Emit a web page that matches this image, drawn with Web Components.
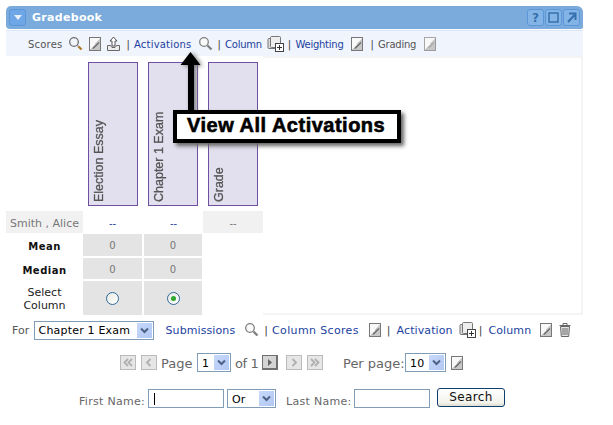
<!DOCTYPE html>
<html>
<head>
<meta charset="utf-8">
<style>
  html, body { margin: 0; background: #fff; }
  body { font-family: "DejaVu Sans", sans-serif; font-size: 11px; color: #555; }
</style>
</head>
<body>
<gb-page></gb-page>

<script>
  const EDIT_BASE = '<defs><linearGradient id="eg" x1="0" y1="0" x2="1" y2="1"><stop offset=".5" stop-color="#f8f8f8"/><stop offset=".5" stop-color="#c8c8c8"/></linearGradient></defs>';
  const ICONS = {
    search: '<circle cx="6" cy="6" r="4.300" fill="#f2f6fa" stroke="#707070" stroke-width="1.300"/><path d="M9.200 9.200l1.300 1.300" stroke="#999" stroke-width="1.500"/><path d="M10.500 10.500l3 3" stroke="#b07820" stroke-width="2.300"/>',
    searchgray: '<circle cx="6" cy="6" r="4.300" fill="#fafafa" stroke="#808080" stroke-width="1.300"/><path d="M9.500 9.500l4 4" stroke="#808080" stroke-width="2.300"/>',
    edit: EDIT_BASE + '<rect x="1.500" y="1.500" width="11" height="13" fill="url(#eg)" stroke="#777"/><path d="M5 11.500l5.500-5.500 1 1-5.500 5.500-1.500.5z" fill="#6a6a6a"/>',
    editoff: EDIT_BASE + '<rect x="1.500" y="1.500" width="11" height="13" fill="url(#eg)" stroke="#555" stroke-dasharray="1 1"/><path d="M5 11.500l5.500-5.500 1 1-5.500 5.500z" fill="#aaa"/>',
    upload: '<path d="M1.500 9.500h3l1.500 2h3l1.500-2h3v5h-12z" fill="#eee" stroke="#666"/><path d="M7.500 1l3.500 4H9v5H6V5H4z" fill="#fff" stroke="#555"/>',
    add: '<rect x="1" y="3.500" width="11" height="10" rx="1" fill="#ddd" stroke="#777"/><rect x="3.500" y="1.500" width="10" height="11" rx="1" fill="#eee" stroke="#777"/><rect x="8.500" y="8.500" width="8" height="8" fill="#fff" stroke="#444"/><path d="M12.500 10v5M10 12.500h5" stroke="#333"/>',
    trash: '<path d="M1.500 3.500h11M5 3V1.500h4V3" fill="none" stroke="#666"/><path d="M2.500 4.500h9l-.8 10h-7.400z" fill="#e4e4e4" stroke="#666"/><path d="M5 6v7M7 6v7M9 6v7" stroke="#666"/>'
  };

  class GbIcon extends HTMLElement {
    connectedCallback() {
      const name = this.getAttribute('name');
      const w = name === 'add' ? 18 : name === 'trash' ? 14 : 16;
      const h = name === 'add' ? 18 : 16;
      this.attachShadow({mode: 'open'}).innerHTML = `
        <style>:host { display: inline-flex; flex: none; } svg { display: block; }</style>
        <svg width="${w}" height="${h}" viewBox="0 0 ${w} ${h}">${ICONS[name]}</svg>`;
    }
  }

  class GbTitlebar extends HTMLElement {
    connectedCallback() {
      this.attachShadow({mode: 'open'}).innerHTML = `
        <style>
          :host { display: flex; align-items: center; height: 23px; margin: 6px 30px 0 6px; padding: 0 3px 0 3px;
                  background: #7aabdc; border-radius: 5px 6px 2px 4px; color: #fff; font-weight: bold; font-size: 11px; letter-spacing: .3px; }
          .btn { box-sizing: border-box; width: 17px; height: 17px; border: 1px solid #5a96d8; border-radius: 3px; background: #84b4e6;
                 color: #3570ad; display: flex; align-items: center; justify-content: center; font-weight: bold; font-size: 12px; letter-spacing: 0; }
          .menu { margin-right: 6px; background: #6ea6e8; }
          .title { flex: 1; }
          .tools { display: flex; gap: 1px; }
          .tri { width: 0; height: 0; border: 4px solid transparent; border-top: 5px solid #e8f0fa; border-bottom: 0; }
          svg { display: block; }
        </style>
        <div class="btn menu"><div class="tri"></div></div>
        <div class="title"><slot></slot></div>
        <div class="tools">
          <div class="btn">?</div>
          <div class="btn"><svg width="11" height="11"><rect x="1" y="1" width="9" height="9" fill="none" stroke="#3570ad" stroke-width="1.500"/></svg></div>
          <div class="btn"><svg width="11" height="11"><path d="M2 10l6.500-7M3 1.500h6.500V8" fill="none" stroke="#3570ad" stroke-width="2"/></svg></div>
        </div>`;
    }
  }

  class GbToolbar extends HTMLElement {
    connectedCallback() {
      this.attachShadow({mode: 'open'}).innerHTML = `
        <style>
          :host { display: flex; align-items: center; height: 26px; margin: 1px 30px 0 6px; padding: 1px 0 0 22px;
                  background: #f0f4fc; border-top: 1px solid #dce6f4; box-sizing: border-box; font-size: 10px; letter-spacing: .2px; color: #555; }
          ::slotted(a) { color: #1c3fa0; }
        </style>
        <slot></slot>`;
    }
  }

  class GbHeadcell extends HTMLElement {
    connectedCallback() {
      this.attachShadow({mode: 'open'}).innerHTML = `
        <style>
          :host { display: flex; box-sizing: border-box; width: 50px; height: 144px; background: #e2dfee; border: 1px solid #6f4f9f;
                  align-items: flex-start; justify-content: flex-start; }
          .t { writing-mode: vertical-rl; transform: rotate(180deg); font: 12.500px "Liberation Sans", sans-serif; -webkit-text-stroke: .3px #555;
               color: #555; height: 139px; margin-left: 3px; box-sizing: border-box; white-space: nowrap; }
        </style>
        <div class="t"><slot></slot></div>`;
    }
  }

  class GbGrid extends HTMLElement {
    connectedCallback() {
      this.attachShadow({mode: 'open'}).innerHTML = `
        <style>
          :host { display: flex; margin: 0 30px 0 6px; }
          .left { width: 257px; flex: none; }
          .fill { flex: 1; border: 2px solid #f4f4f4; border-left: 0; }
          .heads { display: flex; gap: 10px; margin: 6px 0 0 82px; }
          .grid { display: grid; grid-template-columns: 77px 61px 59px 60px; grid-template-rows: 23px 24px 23px 34px; margin-top: 5px; font-size: 11px; width: 257px; }
          .c { display: flex; align-items: center; justify-content: center; text-align: center; color: #777; padding-top: 1px; box-sizing: border-box; }
          .lab { color: #222; line-height: 13px; }
          .b { font-weight: bold; color: #111; font-size: 10px; letter-spacing: .5px; }
          .g { background: #e4e4e4; margin: 0 2px 2px 0; font-size: 10px; }
          .g.n { margin-right: 1px; }
          .g.e { margin-bottom: 0; }
          .s { background: #f1f1f1; margin-bottom: 1px; font-size: 11px; padding-top: 2px; }
          .lnk { color: #1c3fa0; font-size: 10px; padding-top: 2px; }
          .m { margin-right: 2px; }
          .radio { box-sizing: border-box; width: 13px; height: 13px; border-radius: 50%; border: 1px solid #2f6a9c; background: linear-gradient(135deg, #e8e8e4, #fff); display: flex; align-items: center; justify-content: center; }
          .radio i { width: 5px; height: 5px; border-radius: 50%; background: #2ca82c; }
        </style>
        <div class="left">
          <div class="heads">
            <gb-headcell>Election Essay</gb-headcell>
            <gb-headcell>Chapter 1 Exam</gb-headcell>
            <gb-headcell>Grade</gb-headcell>
          </div>
          <div class="grid">
            <div class="c s">Smith , Alice</div><div class="c lnk m">--</div><div class="c lnk">--</div><div class="c s" style="font-size:10px">--</div>
            <div class="c lab b">Mean</div><div class="c g">0</div><div class="c g n">0</div><div></div>
            <div class="c lab b">Median</div><div class="c g">0</div><div class="c g n">0</div><div></div>
            <div class="c lab">Select<br>Column</div><div class="c g e"><div class="radio"></div></div><div class="c g n e"><div class="radio"><i></i></div></div><div></div>
          </div>
        </div>
        <div class="fill"></div>`;
    }
  }

  class GbSelect extends HTMLElement {
    connectedCallback() {
      const w = this.getAttribute('width') || 60;
      this.attachShadow({mode: 'open'}).innerHTML = `
        <style>
          :host { display: inline-flex; flex: none; box-sizing: border-box; width: ${w}px; height: 19px; border: 1px solid #7f9db9; background: #fff;
                  align-items: center; padding: 1px; color: #000; font-size: 11px; letter-spacing: .2px; }
          .v { flex: 1; padding: 1px 0 0 3px; white-space: nowrap; }
          .a { width: 15px; height: 15px; background: linear-gradient(135deg, #c8d8fa, #b0c8f4); display: flex; align-items: center; justify-content: center; }
        </style>
        <div class="v"><slot></slot></div>
        <div class="a"><svg width="9" height="7"><path d="M1 1.500l3.500 3.500L8 1.500" fill="none" stroke="#4d6185" stroke-width="2"/></svg></div>`;
    }
  }

  class GbNavbtn extends HTMLElement {
    connectedCallback() {
      const on = this.hasAttribute('on');
      const d = this.getAttribute('d');
      const mark = on
        ? `<path d="${d}" fill="#666"/>`
        : `<path d="${d}" fill="none" stroke="#b0b0b0" stroke-width="1.800"/>`;
      this.attachShadow({mode: 'open'}).innerHTML = `
        <style>
          :host { display: inline-flex; flex: none; box-sizing: border-box; width: 16px; height: 15px; background: ${on ? '#d4d4d4' : '#e6e6e6'}; align-items: center; justify-content: center;
                  border: 1px solid ${on ? '#707070' : '#bbb'}; ${on ? 'border-right-width:2px;border-bottom-width:2px;' : ''} }
          svg { display: block; }
        </style>
        <svg width="10" height="9">${mark}</svg>`;
    }
  }

  class GbFilter extends HTMLElement {
    connectedCallback() {
      this.attachShadow({mode: 'open'}).innerHTML = `
        <style>
          :host { display: flex; align-items: center; height: 18px; margin: 6px 0 0 12px; font-size: 11px; color: #555; letter-spacing: .1px; }
          ::slotted(*) { flex: none; }
          ::slotted(a) { color: #1c3fa0; }
        </style>
        <slot></slot>`;
    }
  }

  class GbPager extends HTMLElement {
    connectedCallback() {
      this.attachShadow({mode: 'open'}).innerHTML = `
        <style>
          :host { display: flex; align-items: center; height: 19px; margin: 14px 0 0 120px; font-size: 13px; color: #666; }
          ::slotted(span) { white-space: nowrap; padding-top: 1px; }
        </style>
        <slot></slot>`;
    }
  }

  class GbSearch extends HTMLElement {
    connectedCallback() {
      this.attachShadow({mode: 'open'}).innerHTML = `
        <style>
          :host { display: flex; align-items: center; height: 19px; margin: 17px 0 0 79px; font-size: 11px; letter-spacing: .3px; color: #666; }
          .lab { padding-top: 6px; white-space: nowrap; }
          .inp { box-sizing: border-box; width: 76px; height: 19px; border: 1px solid #7f9db9; background: #fff; padding: 3px 0 0 5px; flex: none; }
          .caret { width: 1px; height: 12px; background: #000; }
          .go { box-sizing: border-box; width: 68px; height: 19px; margin: -2px 0 0 7px; border: 1px solid #0f3f6f; border-radius: 3px; background: linear-gradient(#fff, #f3f3ec 80%, #dcdcd2);
                color: #111; font-size: 12px; text-align: center; line-height: 17px; letter-spacing: .4px; }
        </style>
        <span class="lab" style="width:65px">First Name:</span>
        <div class="inp" style="margin-left:4px"><div class="caret"></div></div>
        <gb-select width="49" style="margin-left:3px">Or</gb-select>
        <span class="lab" style="margin-left:10px;width:64px">Last Name:</span>
        <div class="inp" style="margin-left:4px"></div>
        <div class="go">Search</div>`;
    }
  }

  class GbCallout extends HTMLElement {
    connectedCallback() {
      this.attachShadow({mode: 'open'}).innerHTML = `
        <style>
          :host { display: block; position: absolute; left: 173px; top: 44px; width: 232px; height: 104px; pointer-events: none; }
          svg { position: absolute; left: 0; top: 0; }
          .box { position: absolute; left: 0; top: 66px; box-sizing: border-box; width: 228px; height: 33px; border: 4px solid #000; background: #fff;
                 box-shadow: 3px 3px 4px #666; color: #000; font: bold 20px "Liberation Sans", sans-serif; -webkit-text-stroke: .6px #000; letter-spacing: .5px; line-height: 23px; padding-left: 10px; white-space: nowrap; }
        </style>
        <svg width="40" height="70"><path d="M7.500 21L17.500 8l10 13h-6.500v47h-6V21z" fill="#000" style="filter:drop-shadow(2px 1px 2px #777)"/></svg>
        <div class="box"><slot></slot></div>`;
    }
  }

  class GbPage extends HTMLElement {
    connectedCallback() {
      this.attachShadow({mode: 'open'}).innerHTML = `
        <style>
          :host { display: block; position: relative; width: 613px; height: 425px; overflow: hidden; }
          a { text-decoration: none; }
          .sep { color: #444; }
          .tight { letter-spacing: -.25px; }
        </style>
        <gb-titlebar>Gradebook</gb-titlebar>
        <gb-toolbar>
          <span>Scores</span>
          <gb-icon name="search" style="margin-left:6px"></gb-icon>
          <gb-icon name="edit" style="margin-left:4px"></gb-icon>
          <gb-icon name="upload" style="margin-left:2px"></gb-icon>
          <span class="sep" style="margin-left:4px">|</span><a style="margin-left:4px">Activations</a>
          <gb-icon name="searchgray" style="margin-left:7px"></gb-icon>
          <span class="sep" style="margin-left:3px">|</span><a class="tight" style="margin-left:4px">Column</a>
          <gb-icon name="add" style="margin-left:5px"></gb-icon>
          <span class="sep" style="margin-left:3px">|</span><a class="tight" style="margin-left:4px">Weighting</a>
          <gb-icon name="edit" style="margin-left:6px"></gb-icon>
          <span class="sep" style="margin-left:5px">|</span><span class="tight" style="margin-left:4px">Grading</span>
          <gb-icon name="editoff" style="margin-left:7px"></gb-icon>
        </gb-toolbar>
        <gb-grid></gb-grid>
        <gb-filter>
          <span style="margin-right:4px">For</span>
          <gb-select width="120">Chapter 1 Exam</gb-select>
          <a style="margin-left:12px">Submissions</a>
          <gb-icon name="searchgray" style="margin-left:9px"></gb-icon>
          <span class="sep" style="margin:0 4px">|</span><a style="letter-spacing:.35px">Column Scores</a>
          <gb-icon name="edit" style="margin-left:9px"></gb-icon>
          <span class="sep" style="margin:0 6px 0 3px">|</span><a>Activation</a>
          <gb-icon name="add" style="margin-left:6px"></gb-icon>
          <span class="sep" style="margin:0 6px 0 2px">|</span><a>Column</a>
          <gb-icon name="edit" style="margin-left:8px"></gb-icon>
          <gb-icon name="trash" style="margin-left:3px"></gb-icon>
        </gb-filter>
        <gb-pager>
          <gb-navbtn d="M5 1L1.500 4.500 5 8M9 1L5.500 4.500 9 8"></gb-navbtn>
          <gb-navbtn d="M6.500 1L3 4.500 6.500 8" style="margin-left:5px"></gb-navbtn>
          <span style="margin-left:4px;width:31px">Page</span>
          <gb-select width="34" style="margin-left:5px">1</gb-select>
          <span style="margin-left:4px;width:23px;letter-spacing:-.4px">of 1</span>
          <gb-navbtn on d="M3 1l4 3.500L3 8z" style="margin-left:4px"></gb-navbtn>
          <gb-navbtn d="M3.500 1L7 4.500 3.500 8" style="margin-left:8px"></gb-navbtn>
          <gb-navbtn d="M1 1L4.500 4.500 1 8M5 1L8.500 4.500 5 8" style="margin-left:5px"></gb-navbtn>
          <span style="margin-left:20px;width:61px">Per page:</span>
          <gb-select width="41" style="margin-left:1px">10</gb-select>
          <gb-icon name="edit" style="margin-left:4px"></gb-icon>
        </gb-pager>
        <gb-search></gb-search>
        <gb-callout>View All Activations</gb-callout>`;
    }
  }

  customElements.define('gb-icon', GbIcon);
  customElements.define('gb-titlebar', GbTitlebar);
  customElements.define('gb-toolbar', GbToolbar);
  customElements.define('gb-headcell', GbHeadcell);
  customElements.define('gb-grid', GbGrid);
  customElements.define('gb-select', GbSelect);
  customElements.define('gb-navbtn', GbNavbtn);
  customElements.define('gb-filter', GbFilter);
  customElements.define('gb-pager', GbPager);
  customElements.define('gb-search', GbSearch);
  customElements.define('gb-callout', GbCallout);
  customElements.define('gb-page', GbPage);
</script>
</body>
</html>
